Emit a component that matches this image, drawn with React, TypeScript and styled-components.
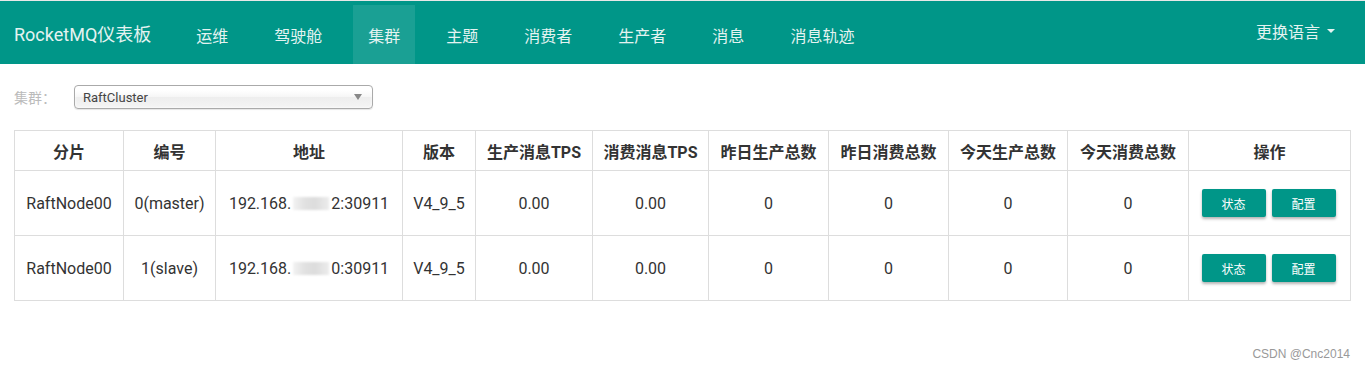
import React from "react";
import styled, { createGlobalStyle } from "styled-components";

const GlobalStyle = createGlobalStyle`
  body {
    margin: 0;
    background: #fff;
    font-family: Roboto, "Noto Sans CJK SC", sans-serif;
    color: #333;
  }
`;

const Page = styled.div`
  width: 1365px;
  height: 370px;
  border-top: 1px solid #e8e8e8;
  box-sizing: border-box;
  overflow: hidden;
`;

const NavBar = styled.div`
  display: flex;
  align-items: stretch;
  height: 63px;
  background: #009688;
  color: #e4f3f1;
`;

const Brand = styled.div`
  display: flex;
  align-items: center;
  padding: 0 30px 0 14px;
  font-size: 18px;
`;

const NavList = styled.div`
  display: flex;
  gap: 16px;
  flex: 1;
  padding-top: 4px;
`;

const NavItem = styled.div<{ $active?: boolean }>`
  display: flex;
  align-items: center;
  padding: 0 15px;
  font-size: 16px;
  background: ${(p) => (p.$active ? "rgba(255,255,255,0.1)" : "transparent")};
`;

const LangMenu = styled.div`
  display: flex;
  align-items: center;
  gap: 7px;
  padding: 0 30px 4px 0;
  font-size: 16px;
`;

const Caret = styled.span`
  width: 0;
  height: 0;
  border-left: 4px solid transparent;
  border-right: 4px solid transparent;
  border-top: 4px solid #e4f3f1;
`;

const Content = styled.div`
  padding: 21px 14px 0;
`;

const FilterRow = styled.div`
  display: flex;
  align-items: center;
  height: 24px;
  margin-bottom: 21px;
`;

const Label = styled.span`
  width: 60px;
  font-size: 14px;
  color: #bbb;
`;

const Select = styled.div`
  display: flex;
  align-items: center;
  justify-content: space-between;
  box-sizing: border-box;
  width: 299px;
  height: 24px;
  padding: 0 10px 0 8px;
  border: 1px solid #aaa;
  border-radius: 4px;
  background: linear-gradient(#fff 20%, #f6f6f6 50%, #eee 52%, #f4f4f4 100%);
  box-shadow: 0 0 3px #fff inset, 0 1px 1px rgba(0, 0, 0, 0.1);
  font-size: 13px;
  color: #444;
`;

const SelectArrow = styled.span`
  width: 0;
  height: 0;
  border-left: 4px solid transparent;
  border-right: 4px solid transparent;
  border-top: 6px solid #888;
`;

const Table = styled.table`
  width: 1336px;
  table-layout: fixed;
  border-collapse: collapse;
  font-size: 16px;
`;

const Th = styled.th`
  height: 39px;
  border: 1px solid #ddd;
  font-size: 16px;
  font-weight: 700;
  color: #333;
  text-align: center;
  padding: 0;
  white-space: nowrap;
`;

const Td = styled.td`
  height: 64px;
  border: 1px solid #ddd;
  text-align: center;
  padding: 0;
  color: #333;
  white-space: nowrap;
`;

const Blur = styled.span`
  display: inline-block;
  width: 36px;
  height: 13px;
  margin: 0 2px;
  vertical-align: -1px;
  background: linear-gradient(90deg, #f3f3f3, #e2e2e2 30%, #dcdcdc 60%, #ececec);
  filter: blur(1px);
`;

const ButtonGroup = styled.div`
  display: flex;
  justify-content: center;
  gap: 6px;
  margin-left: -2px;
`;

const ActionButton = styled.button`
  width: 64px;
  height: 28px;
  border: none;
  border-radius: 2px;
  background: #009688;
  color: #fff;
  font-family: Roboto, "Noto Sans CJK SC", sans-serif;
  font-size: 12px;
  box-shadow: 0 2px 3px rgba(0, 0, 0, 0.3);
  cursor: pointer;
`;

const Watermark = styled.div`
  margin-top: 46px;
  padding-right: 15px;
  text-align: right;
  font-family: "Liberation Sans", Arial, sans-serif;
  font-size: 12px;
  color: #999;
`;

interface BrokerRow {
  name: string;
  id: string;
  ipHead: string;
  ipTail: string;
  version: string;
  produceTps: string;
  consumeTps: string;
  yProduce: number;
  yConsume: number;
  tProduce: number;
  tConsume: number;
}

const navItems = ["运维", "驾驶舱", "集群", "主题", "消费者", "生产者", "消息", "消息轨迹"];

const columns: [string, number][] = [
  ["分片", 109],
  ["编号", 92],
  ["地址", 187],
  ["版本", 73],
  ["生产消息TPS", 117],
  ["消费消息TPS", 116],
  ["昨日生产总数", 120],
  ["昨日消费总数", 120],
  ["今天生产总数", 119],
  ["今天消费总数", 121],
  ["操作", 162],
];

const rows: BrokerRow[] = [
  {
    name: "RaftNode00",
    id: "0(master)",
    ipHead: "192.168.",
    ipTail: "2:30911",
    version: "V4_9_5",
    produceTps: "0.00",
    consumeTps: "0.00",
    yProduce: 0,
    yConsume: 0,
    tProduce: 0,
    tConsume: 0,
  },
  {
    name: "RaftNode00",
    id: "1(slave)",
    ipHead: "192.168.",
    ipTail: "0:30911",
    version: "V4_9_5",
    produceTps: "0.00",
    consumeTps: "0.00",
    yProduce: 0,
    yConsume: 0,
    tProduce: 0,
    tConsume: 0,
  },
];

const App: React.FC = () => {
  return (
    <Page>
      <GlobalStyle />
      <NavBar>
        <Brand>RocketMQ仪表板</Brand>
        <NavList>
          {navItems.map((item) => (
            <NavItem key={item} $active={item === "集群"}>
              {item}
            </NavItem>
          ))}
        </NavList>
        <LangMenu>
          更换语言
          <Caret />
        </LangMenu>
      </NavBar>

      <Content>
        <FilterRow>
          <Label>集群：</Label>
          <Select>
            <span>RaftCluster</span>
            <SelectArrow />
          </Select>
        </FilterRow>

        <Table>
          <colgroup>
            {columns.map(([title, width]) => (
              <col key={title} style={{ width }} />
            ))}
          </colgroup>
          <thead>
            <tr>
              {columns.map(([title]) => (
                <Th key={title}>{title}</Th>
              ))}
            </tr>
          </thead>
          <tbody>
            {rows.map((row) => (
              <tr key={row.id}>
                <Td>{row.name}</Td>
                <Td>{row.id}</Td>
                <Td>
                  {row.ipHead}
                  <Blur />
                  {row.ipTail}
                </Td>
                <Td>{row.version}</Td>
                <Td>{row.produceTps}</Td>
                <Td>{row.consumeTps}</Td>
                <Td>{row.yProduce}</Td>
                <Td>{row.yConsume}</Td>
                <Td>{row.tProduce}</Td>
                <Td>{row.tConsume}</Td>
                <Td>
                  <ButtonGroup>
                    <ActionButton>状态</ActionButton>
                    <ActionButton>配置</ActionButton>
                  </ButtonGroup>
                </Td>
              </tr>
            ))}
          </tbody>
        </Table>
      </Content>

      <Watermark>CSDN @Cnc2014</Watermark>
    </Page>
  );
};

export default App;
